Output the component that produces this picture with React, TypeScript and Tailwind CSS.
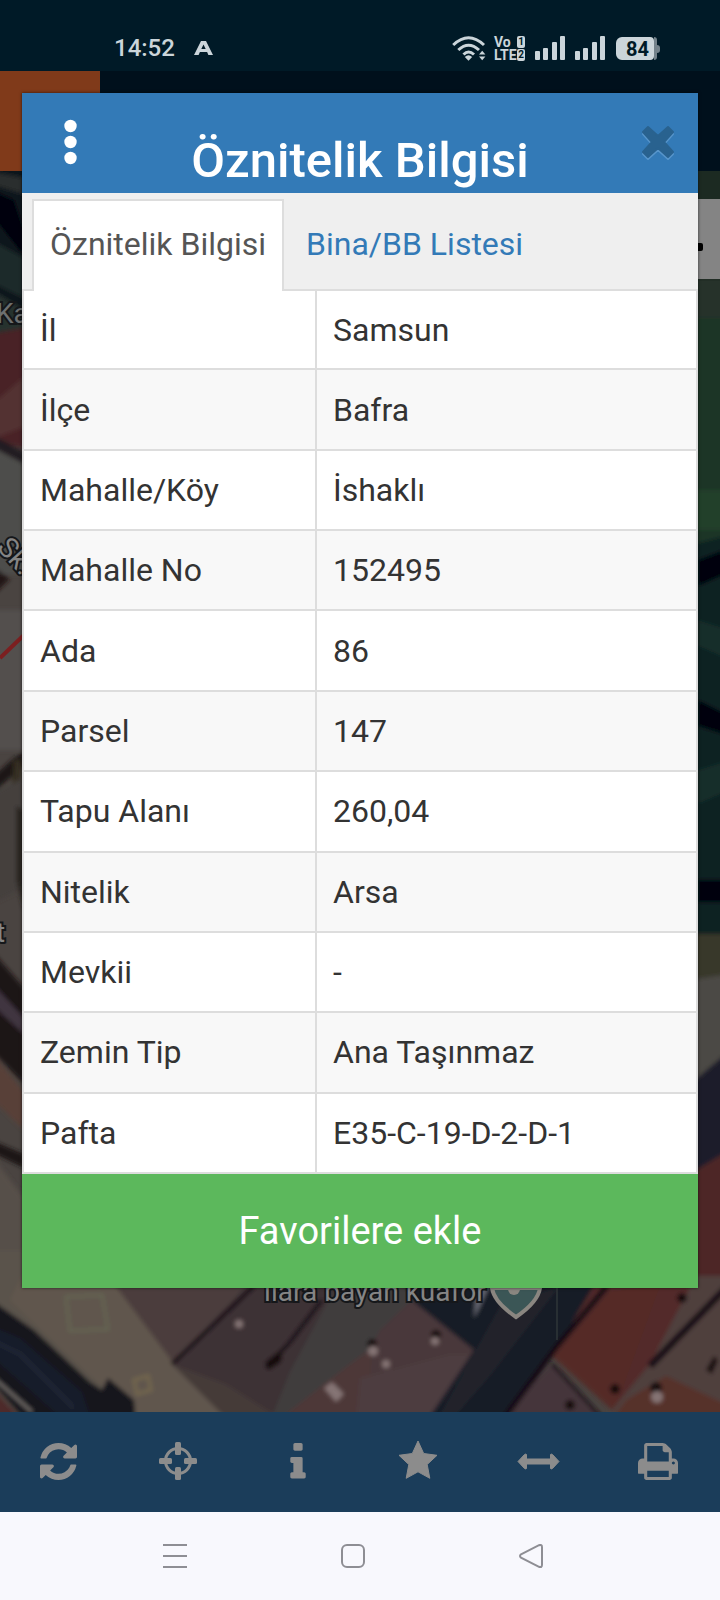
import React, { useState } from 'react'

interface Attribute {
  label: string
  value: string
}

const attributes: Attribute[] = [
  { label: 'İl', value: 'Samsun' },
  { label: 'İlçe', value: 'Bafra' },
  { label: 'Mahalle/Köy', value: 'İshaklı' },
  { label: 'Mahalle No', value: '152495' },
  { label: 'Ada', value: '86' },
  { label: 'Parsel', value: '147' },
  { label: 'Tapu Alanı', value: '260,04' },
  { label: 'Nitelik', value: 'Arsa' },
  { label: 'Mevkii', value: '-' },
  { label: 'Zemin Tip', value: 'Ana Taşınmaz' },
  { label: 'Pafta', value: 'E35-C-19-D-2-D-1' },
]

const tabs = ['Öznitelik Bilgisi', 'Bina/BB Listesi']

const SignalIcon = () => (
  <svg className="w-[31px] h-6" viewBox="0 0 31 24" fill="currentColor">
    <rect x="0" y="15" width="5" height="9" rx="1" />
    <rect x="8" y="12" width="5" height="12" rx="1" />
    <rect x="17" y="6" width="5" height="18" rx="1" />
    <rect x="25" y="0" width="5" height="24" rx="1" />
  </svg>
)

const StatusBar: React.FC = () => (
  <header className="h-[71px] shrink-0 bg-[#001a27] pt-9 pl-[114px] pr-[60px] flex items-start text-[#cbd5da]">
    <span className="text-2xl leading-6 font-medium">14:52</span>
    <svg className="w-[19px] h-[14px] mt-[5px] ml-[19px]" viewBox="0 0 19 14" fill="currentColor" fillRule="evenodd">
      <path d="M7 0h5l7 14h-4.6l-1.3-3H5.9l-1.3 3H0zM9.5 3.4L7.3 8h4.4z" />
    </svg>
    <svg className="w-[34px] h-[25px] ml-auto" viewBox="0 0 34 25" fill="none" stroke="currentColor" strokeWidth="3">
      <path d="M1.2 9Q16.500 -5.500 32 9" />
      <path d="M6.300 14Q16.500 4.500 27 14" />
      <path d="M11.500 18.500Q16.500 13.500 22 18.500" />
      <path d="M12.800 21q3.700-3.500 7.400 0l-3.700 3.800z" fill="currentColor" stroke="none" />
      <path d="M27 18.500l3.200-3.700 3.200 3.700zM27 20.500l3.200 3.700 3.200-3.700z" fill="currentColor" stroke="none" />
    </svg>
    <div className="grid grid-cols-[23px_8px] gap-y-px ml-2 text-sm leading-3 font-bold">
      <span>Vo</span>
      <span className="h-3 rounded-xs bg-[#cbd5da] text-[#001a27] text-[10px] text-center">1</span>
      <span>LTE</span>
      <span className="h-3 rounded-xs bg-[#cbd5da] text-[#001a27] text-[10px] text-center">2</span>
    </div>
    <div className="flex gap-[9px] ml-[10px]">
      <SignalIcon />
      <SignalIcon />
    </div>
    <div className="flex items-center ml-[10px] mt-px">
      <span className="w-[38px] h-[23px] rounded-l-md rounded-r-sm bg-[#cbd5da] text-[#001a27] text-xl leading-6 font-bold text-right pr-[5px]">
        84
      </span>
      <span className="w-[3px] h-[23px] rounded-r-md bg-[#73828b]" />
      <span className="w-[3px] h-2 rounded-r bg-[#73828b]" />
    </div>
  </header>
)

/* Dimmed satellite imagery behind the dialog */
const MapView: React.FC = () => (
  <svg
    className="absolute inset-0 w-full h-full"
    viewBox="0 171 720 1241"
    preserveAspectRatio="xMidYMax slice"
    fontFamily="Roboto, sans-serif"
  >
    <defs>
      <filter id="soft" x="0" y="0" width="1" height="1">
        <feGaussianBlur stdDeviation="2" />
      </filter>
    </defs>
    <rect y="171" width="720" height="1241" fill="#4a4441" />
    <g filter="url(#soft)">
      {/* left edge */}
      <path d="M-9 160h49v190H-9z" fill="#10171a" />
      <path d="M-9 172l33 6v16L-9 184z" fill="#2a2d2e" />
      <path d="M-9 190l23 10 10 30v26L-9 214z" fill="#03060c" />
      <path d="M-9 240l33 18v40L-9 282z" fill="#1c2b29" />
      <path d="M-9 290l33 20v34H-9z" fill="#26312f" />
      <path d="M-9 334l33-6v120L-9 440z" fill="#482426" />
      <path d="M-9 405l33-28v50L-9 440z" fill="#533233" />
      <path d="M-9 434l33 18v12L-9 446z" fill="#211f20" />
      <path d="M-9 448l33 16v110H-9z" fill="#4d4d4b" />
      <path d="M-9 565l19 14-19 18z" fill="#241814" />
      <path d="M-9 610h33v140H-9z" fill="#52504d" />
      <path d="M-9 778l23-20 10-6v14L-9 794z" fill="#1c1814" />
      <path d="M14 760h8l-6 70H8z" fill="#352e21" />
      <path d="M-9 794l33-16v110l-33 16z" fill="#45413c" />
      <path d="M16 806l8 4v100l-8-30z" fill="#2a2624" />
      <path d="M-9 950l33 38v96l-33-34z" fill="#1b1218" />
      <path d="M-9 982l33 36v16l-33-30z" fill="#41353f" />
      <path d="M-9 1052l33 40v38l-33-32z" fill="#594139" />
      <path d="M-9 1140l33 14v14l-33-16z" fill="#1d1514" />
      <path d="M-9 1155l33 43v92H-9z" fill="#564f48" />
      {/* right edge */}
      <path d="M690 160h40v121h-40z" fill="#1b2a21" />
      <path d="M690 279h40v60h-40z" fill="#27312a" />
      <path d="M690 318h40v232h-40z" fill="#1c3627" />
      <path d="M690 490h40v40h-40z" fill="#21402a" />
      <path d="M690 545l40-10v400h-40z" fill="#0a2022" />
      <path d="M698 560l32-12v24l-32 14zM698 700l32 16v20l-32-10zM698 880h32v22h-32z" fill="#03060f" />
      <path d="M698 620l32 10v30l-32-14zM698 770l32-10v30l-32 14z" fill="#142d2b" />
      <path d="M690 934h40v50h-40z" fill="#38372c" />
      <path d="M690 980l40-6v80l-40 30z" fill="#4b4845" />
      <path d="M690 1084l40-34v100l-40 24z" fill="#1b1c29" />
      <path d="M690 1174l40-24v140h-40z" fill="#4e2625" />
      {/* bottom strip: road, parked cars and roofs */}
      <path d="M-9 1250h239v172H-9z" fill="#5a524b" />
      <path d="M22 1276h96l113 146H140L10 1300z" fill="#61564d" />
      <path d="M-9 1300l43 30 56 52 12 8 6-12 26 22 2 22H26l-35-40z" fill="#12151e" />
      <path d="M-9 1326l29 12 62 54 10 30H66l-75-66z" fill="#181b2a" />
      <path d="M-9 1340l29 14 54 54" fill="none" stroke="#2b2f3d" strokeWidth="2" />
      <path d="M-9 1386l33 36H-9z" fill="#4d2b29" />
      <path d="M-4 1380l36 32" fill="none" stroke="#77716d" strokeWidth="3" />
      <path d="M108 1276h152l-86 88z" fill="#4b3e3c" />
      <path d="M256 1276h90v146H230l-58-58z" fill="#3d3036" />
      <path d="M172 1364l54 20 60 38h-56z" fill="#453a39" />
      <path d="M334 1290l90-14-22 146H270l20-50z" fill="#403e3d" />
      <path d="M380 1330l40-38 54 58-38 72H330z" fill="#48383a" />
      <path d="M350 1364l22-16-4 74h-92z" fill="#4e3739" />
      <path d="M360 1378l90-24 20 0-34 68h-80z" fill="#4e3c40" />
      <path d="M400 1276h210L506 1422h-80l48-72-60-48z" fill="#191b26" />
      <path d="M476 1292l14-8-10 22-6 12z" fill="#656671" />
      <path d="M500 1306l60-20-70 90-40 46h-14z" fill="#20232c" />
      <path d="M600 1276h106l-80 136-74-56z" fill="#532a2b" />
      <path d="M552 1356l58-64 50-6-46 126z" fill="#542a27" />
      <path d="M496 1422l56-58 54 58z" fill="#45363b" />
      <path d="M696 1276h34v146H602l48-58z" fill="#50403d" />
      <path d="M626 1400l40-24 64 30v16H610z" fill="#56302b" />
      <g fill="none" stroke="#160c13">
        <path d="M254 1286l-82 78" strokeWidth="4" />
        <path d="M322 1300l-32 42-24 26" strokeWidth="4" />
        <path d="M607 1286l-50 60-56 76" strokeWidth="6" />
        <path d="M552 1364l50 54" strokeWidth="3" />
        <path d="M728 1286l-78 80" strokeWidth="7" />
      </g>
      <path d="M66 1297l36-2 6 34-38 2z" fill="none" stroke="#636553" strokeWidth="3" />
      <path d="M134 1380l14-4 3 14-14 4z" fill="none" stroke="#74684f" strokeWidth="3" />
      <g fill="#19080d">
        <circle cx="372" cy="1344" r="5" />
        <circle cx="436" cy="1335" r="5" />
        <circle cx="656" cy="1388" r="6" />
        <circle cx="682" cy="1298" r="5" />
        <circle cx="615" cy="1389" r="5" />
        <circle cx="570" cy="1405" r="5" />
        <path d="M706 1370l8-14 4 4-6 14z" />
        <path d="M265 1362l18-14-2 14-12 8z" />
      </g>
      <g fill="#857474">
        <circle cx="373" cy="1351" r="5" />
        <circle cx="386" cy="1364" r="4" />
        <circle cx="435" cy="1341" r="4" />
        <circle cx="657" cy="1397" r="6" />
        <circle cx="239" cy="1324" r="4" />
        <path d="M324 1388l8-6 12 12-8 8z" />
      </g>
    </g>
    <path d="M0 658l24-23" stroke="#7c1f20" strokeWidth="4" />
    <path d="M557 1280v60" stroke="#3b4240" />
    <path d="M492 1288q2 14 24 29 22-15 24-29z" fill="#3b5656" stroke="#8a8680" strokeWidth="4" />
    <circle cx="514" cy="1289" r="6" fill="#8a8680" />
    <g fill="#858585" stroke="#15171a" strokeWidth="4" paintOrder="stroke" fontSize="28">
      <text x="264" y="1301">ııara bayan kuaför</text>
      <text x="-4" y="323" fill="#6d7070">Ka</text>
      <text x="-4" y="548" transform="rotate(48 -4 548)">Sk.</text>
      <text x="-4" y="942">t</text>
    </g>
  </svg>
)

const MapToolbar: React.FC = () => (
  <nav className="relative h-[100px] shrink-0 bg-[#1b3d5a] text-[#8c8c8c] grid grid-cols-6 pb-[2px]">
    <button aria-label="Yenile" className="flex items-center justify-center pr-1">
      <svg className="w-[37px] h-[37px]" viewBox="0 0 1536 1536" fill="currentColor">
        <path d="M1511 928q0 5-1 7-64 268-268 434.500t-478 166.500q-146 0-282.500-55t-243.500-157l-129 129q-19 19-45 19t-45-19-19-45v-448q0-26 19-45t45-19h448q26 0 45 19t19 45-19 45l-137 137q71 66 161 102t187 36q134 0 250-65t186-179q11-17 53-117 8-23 30-23h192q13 0 22.500 9.500t9.500 22.500zm25-800v448q0 26-19 45t-45 19h-448q-26 0-45-19t-19-45 19-45l138-138q-148-137-349-137-134 0-250 65t-186 179q-11 17-53 117-8 23-30 23h-199q-13 0-22.500-9.500t-9.500-22.500v-7q65-268 270-434.500t480-166.500q146 0 284 55.500t245 156.500l130-129q19-19 45-19t45 19 19 45z" />
      </svg>
    </button>
    <button aria-label="Konum" className="flex items-center justify-center pr-1">
      <svg className="w-[38px] h-[38px]" viewBox="0 0 38 38" fill="currentColor">
        <circle cx="19" cy="19" r="12.500" fill="none" stroke="currentColor" strokeWidth="3" />
        <rect x="16" y="0" width="6" height="13" rx="1.500" />
        <rect x="16" y="25" width="6" height="13" rx="1.500" />
        <rect x="0" y="16" width="13" height="6" rx="1.500" />
        <rect x="25" y="16" width="13" height="6" rx="1.500" />
      </svg>
    </button>
    <button aria-label="Bilgi" className="flex items-center justify-center pr-1">
      <svg className="w-4 h-[37px]" viewBox="0 0 640 1536" fill="currentColor">
        <path d="M640 1280v128q0 26-19 45t-45 19h-512q-26 0-45-19t-19-45v-128q0-26 19-45t45-19h64v-384h-64q-26 0-45-19t-19-45v-128q0-26 19-45t45-19h384q26 0 45 19t19 45v576h64q26 0 45 19t19 45zm-128-1216v192q0 26-19 45t-45 19h-256q-26 0-45-19t-19-45v-192q0-26 19-45t45-19h256q26 0 45 19t19 45z" />
      </svg>
    </button>
    <button aria-label="Favoriler" className="flex items-center justify-center pr-1">
      <svg className="w-10 h-[42px]" viewBox="0 0 40 42" fill="currentColor" stroke="currentColor" strokeLinejoin="round">
        <path d="M20 1l5.700 12.500 13.300 1.800-9.800 9.200 2.600 13.800L20 31.800 8.200 38.300l2.600-13.800L1 15.300l13.300-1.800z" />
      </svg>
    </button>
    <button aria-label="Mesafe ölç" className="flex items-center justify-center pr-1">
      <svg className="w-[43px] h-[17px]" viewBox="0 0 43 17" fill="currentColor" stroke="currentColor" strokeLinejoin="round">
        <path d="M1 8.500L7.500 1.500Q9.500 .2 9.500 2v4h24V2q0-1.800 2-.5L42 8.500 35.500 15.500Q33.500 16.800 33.500 15v-4h-24v4q0 1.800-2 .5z" />
      </svg>
    </button>
    <button aria-label="Yazdır" className="flex items-center justify-center pr-1">
      <svg className="w-10 h-[37px]" viewBox="0 0 1664 1536" fill="currentColor">
        <path d="M384 1408h896v-256h-896v256zm0-640h896v-384h-160q-40 0-68-28t-28-68v-160h-640v640zm1152 64q0-26-19-45t-45-19-45 19-19 45 19 45 45 19 45-19 19-45zm128 0v416q0 13-9.500 22.500t-22.500 9.500h-224v160q0 40-28 68t-68 28h-960q-40 0-68-28t-28-68v-160h-224q-13 0-22.500-9.500t-9.500-22.500v-416q0-79 56.500-135.500t135.500-56.500h64v-544q0-40 28-68t68-28h672q40 0 88 20t76 48l152 152q28 28 48 76t20 88v256h64q79 0 135.500 56.500t56.500 135.500z" />
      </svg>
    </button>
  </nav>
)

const SystemNav: React.FC = () => (
  <nav className="h-[88px] shrink-0 bg-[#f8f8fd] grid grid-cols-3 pl-[86px] pr-[100px] text-[#8e8e94]">
    <button aria-label="Son uygulamalar" className="flex items-center justify-center">
      <svg className="w-6 h-6" viewBox="0 0 24 24" stroke="currentColor" strokeWidth="2">
        <path d="M0 1h24M0 12h24M0 23h24" />
      </svg>
    </button>
    <button aria-label="Ana ekran" className="flex items-center justify-center">
      <svg className="w-6 h-6" viewBox="0 0 24 24" fill="none" stroke="currentColor" strokeWidth="2">
        <rect x="1" y="1" width="22" height="22" rx="5" />
      </svg>
    </button>
    <button aria-label="Geri" className="flex items-center justify-center">
      <svg className="w-6 h-6" viewBox="0 0 24 24" fill="none" stroke="currentColor" strokeWidth="2">
        <path d="M2 10.300L20 1.200q3-1 3 2v17.600q0 3-3 2L2 13.700q-2-1.700 0-3.400z" />
      </svg>
    </button>
  </nav>
)

const AttributeDialog: React.FC = () => {
  const [activeTab, setActiveTab] = useState(0)

  return (
    <div
      role="dialog"
      aria-labelledby="dialog-title"
      className="absolute inset-x-[22px] top-[93px] bg-white shadow-[0_0_3px_rgba(0,0,0,0.6)]"
    >
      {/* Title bar */}
      <div className="h-[100px] bg-[#337ab7] grid grid-cols-[96px_1fr_96px]">
        <button aria-label="Menü" className="flex items-start justify-center pt-[26px]">
          <svg className="w-[13px] h-[46px]" viewBox="0 0 13 46" fill="white">
            <circle cx="6.500" cy="7" r="6.200" />
            <circle cx="6.500" cy="23" r="6.200" />
            <circle cx="6.500" cy="39" r="6.200" />
          </svg>
        </button>
        <h1 id="dialog-title" className="pt-[42px] text-center text-white text-[49px] leading-[52px] font-medium whitespace-nowrap">
          Öznitelik Bilgisi
        </h1>
        <button aria-label="Kapat" className="flex items-start justify-end pt-8 pr-[23px]">
          <svg className="w-[34px] h-[36px]" viewBox="0 0 34 36" strokeLinejoin="round">
            <path
              d="M7 4l10 9 10-9 5 5-9 10 9 10-5 5-10-9-10 9-5-5 9-10-9-10z"
              fill="#5795cb"
              stroke="#5795cb"
              strokeWidth="2"
            />
            <path
              d="M7 2l10 9 10-9 5 5-9 10 9 10-5 5-10-9-10 9-5-5 9-10-9-10z"
              fill="#29628f"
              stroke="#29628f"
              strokeWidth="2"
            />
          </svg>
        </button>
      </div>

      {/* Tabs */}
      <div role="tablist" className="h-[98px] bg-[#efefef] border-b-2 border-[#ddd] pt-[6px] pl-[10px] flex gap-1">
        {tabs.map((tab, i) => (
          <button
            key={tab}
            role="tab"
            aria-selected={i === activeTab}
            onClick={() => setActiveTab(i)}
            className={`h-[92px] px-4 pb-1 border-2 border-b-0 text-[32px] leading-10 ${
              i === activeTab ? 'bg-white border-[#ddd] text-[#555]' : 'border-transparent text-[#337ab7]'
            }`}
          >
            {tab}
          </button>
        ))}
      </div>

      <table className="w-full h-[883px] table-fixed border-collapse text-left text-[32px] leading-10 text-[#333]">
        <tbody>
          {attributes.map(({ label, value }) => (
            <tr key={label} className="odd:bg-white even:bg-[#f8f8f8]">
              <th scope="row" className="w-[293px] border-2 border-t-0 border-[#ddd] px-4 font-normal">
                {label}
              </th>
              <td className="border-2 border-t-0 border-[#ddd] px-4">{value}</td>
            </tr>
          ))}
        </tbody>
      </table>

      <button className="w-full h-[114px] bg-[#5cb85c] text-white text-[38px] leading-[48px]">
        Favorilere ekle
      </button>
    </div>
  )
}

export default function App() {
  return (
    <div className="relative min-h-screen flex flex-col overflow-hidden bg-[#00101c] font-[Roboto,sans-serif]">
      <StatusBar />
      <div className="h-[100px] shrink-0">
        <div className="w-[100px] h-full bg-[#803a1a]" />
      </div>
      <main className="relative flex-1 min-h-[1241px] overflow-hidden">
        <MapView />
        {/* map control peeking out from under the dialog */}
        <div className="absolute right-0 top-7 w-20 h-20 bg-[#848484] flex items-center justify-end pr-[17px]">
          <svg className="w-8 h-8 mt-6" viewBox="0 0 32 32">
            <path d="M16 2v28M4 4l22 24M4 28L26 4" stroke="black" strokeWidth="3" />
            <rect x="2" y="8" width="30" height="8" rx="2" />
          </svg>
        </div>
      </main>
      <MapToolbar />
      <SystemNav />
      <AttributeDialog />
    </div>
  )
}
